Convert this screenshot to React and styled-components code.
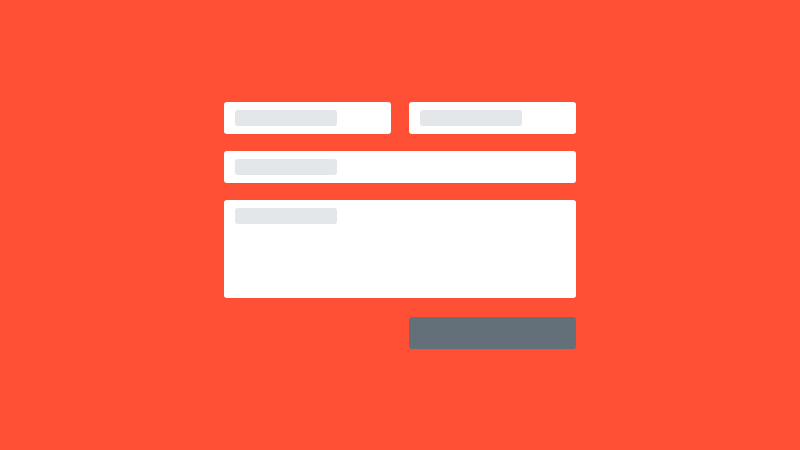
import React from "react";
import styled, { createGlobalStyle } from "styled-components";

const GlobalStyle = createGlobalStyle`
  html, body {
    margin: 0;
    padding: 0;
    height: 100%;
    background: #ff5035;
    font-family: "Liberation Sans", Arial, sans-serif;
  }
  #root {
    height: 100%;
  }
`;

const Page = styled.div`
  height: 100vh;
  display: flex;
  align-items: center;
  justify-content: center;
`;

const Form = styled.div`
  width: 352px;
  display: grid;
  grid-template-columns: 1fr 1fr;
  column-gap: 18px;
  row-gap: 17px;
`;

const Field = styled.div`
  grid-column: ${(p) => (p.$wide ? "1 / span 2" : "auto")};
  height: ${(p) => p.$height || 32}px;
  box-sizing: border-box;
  padding: 8px 11px;
  background: #fff;
  border-radius: 3px;
`;

const Placeholder = styled.div`
  width: 102px;
  height: 16px;
  border-radius: 3px;
  background: #e3e7ea;
`;

const Button = styled.div`
  grid-column: 2;
  height: 32px;
  margin-top: 2px;
  border-radius: 3px;
  background: #637079;
`;

export default function App() {
  return (
    <>
      <GlobalStyle />
      <Page>
        <Form>
          <Field>
            <Placeholder />
          </Field>
          <Field>
            <Placeholder />
          </Field>
          <Field $wide>
            <Placeholder />
          </Field>
          <Field $wide $height={98}>
            <Placeholder />
          </Field>
          <Button />
        </Form>
      </Page>
    </>
  );
}
